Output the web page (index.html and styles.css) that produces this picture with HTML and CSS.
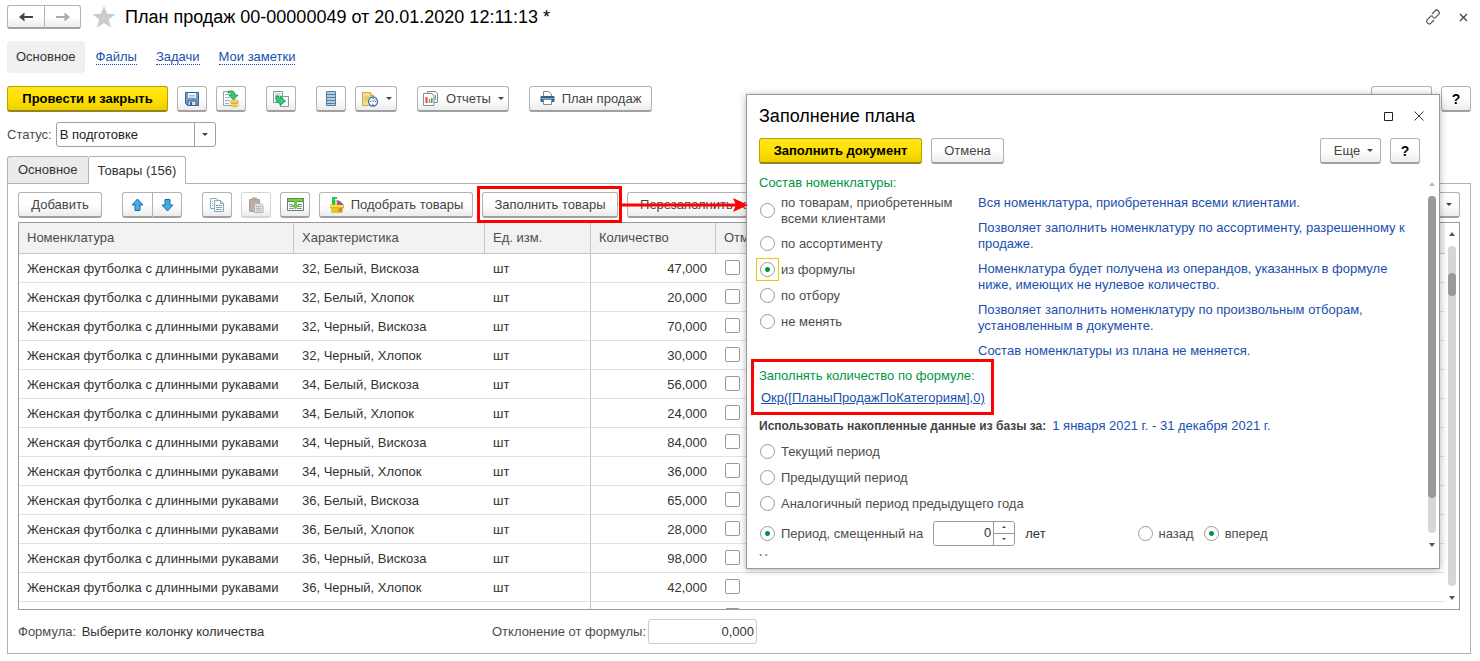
FILE: index.html
```html
<!DOCTYPE html>
<html lang="ru">
<head>
<meta charset="utf-8">
<title>План продаж</title>
<link rel="stylesheet" href="styles.css">
</head>
<body>
<div class="page">
  <header class="title-row">
    <div class="joined nav-buttons">
      <button class="btn" aria-label="Назад"><svg width="14" height="10" viewBox="0 0 14 10"><path d="M3 5h11" stroke="#444" stroke-width="2"/><path d="M0 5l5.500-4.500v3L4 5l1.500 1.500v3z" fill="#444"/></svg></button>
      <button class="btn" aria-label="Вперед"><svg width="14" height="10" viewBox="0 0 14 10"><path d="M0 5h11" stroke="#aaa" stroke-width="2"/><path d="M14 5L8.500.500v3L10 5 8.500 6.500v3z" fill="#aaa"/></svg></button>
    </div>
    <svg class="star" width="24" height="22" viewBox="0 0 24 22"><path d="M12 0l3 7.800 8.500.4-6.700 5.200 2.300 8.300L12 17l-7.100 4.700 2.300-8.300L.5 8.200 9 7.800z" fill="#c9cbcd"/></svg>
    <h1 class="title">План продаж 00-00000049 от 20.01.2020 12:11:13 *</h1>
    <span class="spacer"></span>
    <button class="bare" aria-label="Ссылка"><svg width="16" height="16" viewBox="0 0 16 16" fill="none" stroke="#555" stroke-width="1.200"><path d="M7 5l3-3.200c2.200-2.200 5.600 1.200 3.700 3.600L11 8.200C10 9.200 8.800 9.200 7.800 8.400M9 11l-3 3.200c-2.200 2.200-5.600-1.200-3.700-3.600L5 7.800C6 6.800 7.200 6.800 8.200 7.600"/></svg></button>
    <button class="bare" aria-label="Закрыть"><svg width="9" height="9" viewBox="0 0 9 9"><path d="M1 1l7 7M8 1L1 8" stroke="#444" stroke-width="1.300"/></svg></button>
  </header>

  <nav class="sections">
    <a class="section current" href="#main">Основное</a>
    <a class="section" href="#files">Файлы</a>
    <a class="section" href="#tasks">Задачи</a>
    <a class="section" href="#notes">Мои заметки</a>
  </nav>

  <div class="toolbar">
    <div class="group">
      <button class="btn primary">Провести и закрыть</button>
      <button class="btn icon" aria-label="Записать"><svg width="16" height="16" viewBox="0 0 16 16"><path d="M1.500 1.500h13v13h-11l-2-2z" fill="#6e9cc7" stroke="#38658f"/><path d="M4 2h8v5H4z" fill="#f4f8fb"/><path d="M5 4.500h6M5 6h6" stroke="#a9bccd"/><path d="M4 10h8v4.500H4z" fill="#d5dde5" stroke="#38658f"/><path d="M6 11h2v3H6z" fill="#38658f"/></svg></button>
      <button class="btn icon" aria-label="Провести"><svg width="18" height="18" viewBox="0 0 18 18"><path d="M1.500 1.500h10v14h-10z" fill="#f6f9fa" stroke="#8fa3ae"/><path d="M3 4.500h5M3 7.500h5M3 10.500h5M3 13.500h4" stroke="#9fb0ba"/><path d="M6 1.500c4-1.500 7 0 7 3.500h3l-4.500 5L7 5h3c0-2-1.500-2.500-4-2z" fill="#2fcf70" stroke="#128b45" stroke-width=".8"/><path d="M8.500 11.500v4.500c1 1.500 7 1.500 8 0v-4.500" fill="#e5b53a"/><ellipse cx="12.500" cy="11.500" rx="4" ry="1.500" fill="#f8dc72" stroke="#c89a26" stroke-width=".7"/><path d="M8.500 14c1 1.500 7 1.500 8 0" fill="none" stroke="#fff0a0"/></svg></button>
    </div>
    <div class="group">
      <button class="btn icon" aria-label="Создать на основании"><svg width="18" height="18" viewBox="0 0 18 18"><path d="M1.500 1.500h9v11h-9zM8.500 6.500h8v10h-8z" fill="#f6f9fa" stroke="#8097a5"/><path d="M3 4h6M3 6h6M3 8h3" stroke="#a9bac3"/><path d="M4 6v3.500C4 12 6 13 8 13v2.500l5.500-4.500L8 6.500V9C7 9 6.500 8.500 6.500 6z" fill="#2fcf70" stroke="#128b45" stroke-width=".8"/></svg></button>
    </div>
    <div class="group">
      <button class="btn icon" aria-label="Список"><svg width="10" height="15" viewBox="0 0 10 15"><path d="M.5.500h9v14h-9z" fill="#b3cee1" stroke="#527f9f"/><path d="M1 3.500h8M1 6.500h8M1 9.500h8M1 12.500h8" stroke="#527f9f"/></svg></button>
      <button class="btn history" aria-label="История"><svg width="18" height="16" viewBox="0 0 18 16"><path d="M1.500 1.500h8l3 3v10h-11z" fill="#f6dd91" stroke="#cda64b"/><path d="M9.500 1.500v3h3" fill="#fff2c5" stroke="#cda64b"/><path d="M3 6h6M3 8h4M3 10h3" stroke="#d7b65e"/><circle cx="12" cy="10.500" r="4.500" fill="#f5faff" stroke="#3f74a5" stroke-width="1.300"/><path d="M12 7v1M9 10.500h1M12 13v1M14 10.500h1" fill="none" stroke="#3f74a5"/><path d="M12 10.500l2-2M12 10.500l-1-1" stroke="#e34b3c"/></svg><span class="caret"></span></button>
    </div>
    <div class="group">
      <button class="btn reports"><svg width="17" height="17" viewBox="0 0 17 17"><path d="M5.500 1.500h8l2 2v9h-10z" fill="#f6f8fa" stroke="#78909f"/><path d="M1.500 3.500h8l2.500 2v10H1.500z" fill="#fff" stroke="#78909f"/><path d="M4.500 7v6" stroke="#e0423c" stroke-width="2"/><path d="M7.500 9v4" stroke="#df7a32" stroke-width="1.500"/><path d="M9.800 8v5" stroke="#3ba554" stroke-width="1.500"/><path d="M13.500 5v5" stroke="#72b478"/></svg>Отчеты<span class="caret"></span></button>
    </div>
    <div class="group">
      <button class="btn print"><svg width="15" height="15" viewBox="0 0 15 15"><path d="M3.500 5V.5h5l3 2.500v2" fill="#fff" stroke="#7c8d99"/><rect x=".5" y="5" width="14" height="6" rx="1" fill="#32618c"/><path d="M1 7.500h13" stroke="#80abd0"/><path d="M3.500 8.500h8v5h-8z" fill="#fff" stroke="#7c8d99"/></svg>План продаж</button>
    </div>
    <span class="spacer"></span>
    <div class="group">
      <button class="btn more">Еще<span class="caret"></span></button>
      <button class="btn help">?</button>
    </div>
  </div>

  <div class="status-row">
    <label for="status">Статус:</label>
    <span class="select-box">
      <select id="status"><option>В подготовке</option></select>
      <span class="caret"></span>
    </span>
  </div>

  <div class="tabs" role="tablist">
    <button class="tab" role="tab">Основное</button>
    <button class="tab active" role="tab" aria-selected="true">Товары (156)</button>
  </div>

  <main class="panel">
    <div class="toolbar">
      <div class="group"><button class="btn add">Добавить</button></div>
      <div class="joined">
        <button class="btn icon" aria-label="Вверх"><svg width="13" height="14" viewBox="0 0 13 14"><path d="M6.500 1L12 7H9v5.500H4V7H1z" fill="#41aee8" stroke="#1e6b9e"/></svg></button>
        <button class="btn icon" aria-label="Вниз"><svg width="13" height="14" viewBox="0 0 13 14"><path d="M6.500 13L12 7H9V1.500H4V7H1z" fill="#41aee8" stroke="#1e6b9e"/></svg></button>
      </div>
      <div class="group">
        <button class="btn icon" aria-label="Скопировать"><svg width="16" height="16" viewBox="0 0 16 16"><path d="M1.500 1.500h6l2 2v8h-8z" fill="#fff" stroke="#87a8b9"/><path d="M5.500 3.500h6l3 3v8h-9z" fill="#fff" stroke="#87a8b9"/><path d="M11.500 3.500v3h3M7 8.500h6M7 10.500h6M7 12.500h6M3 4.500h1M3 6.500h1M3 8.500h1" fill="none" stroke="#87a8b9"/></svg></button>
        <button class="btn icon" disabled aria-label="Вставить"><svg width="16" height="16" viewBox="0 0 16 16"><path d="M1.500 2.500h10v12h-10z" fill="#c3aca0" stroke="#b19c92"/><path d="M4 .5h5v3H4z" fill="#a7a7a7"/><path d="M6.500 6.500h6l2.500 2v7H6.500z" fill="#dde4ea" stroke="#a6b5c1"/><path d="M8 9.500h5M8 11.500h5M8 13.500h5" stroke="#a6b5c1"/></svg></button>
        <button class="btn icon" aria-label="Загрузить"><svg width="17" height="15" viewBox="0 0 17 15"><path d="M.5 1.500h16v12H.5z" fill="#fff" stroke="#6c7e6c"/><path d="M.5 1.500h16v3H.5z" fill="#7cc757" stroke="#4b9b37"/><path d="M2 7.500h4M2 9.500h4M2 11.500h5M11 7.500h4M11 9.500h4M10 11.500h5" stroke="#8a938e"/><path d="M7 4h3v4h2.500l-4 4.500-4-4.500H7z" fill="#6fc64b"/></svg></button>
        <button class="btn pick"><svg width="16" height="17" viewBox="0 0 16 17"><path d="M3 1h5v2H6v7H3z" fill="#27cb3b"/><path d="M6 4h2v6H6z" fill="#a8e6a0"/><path d="M8 4l3 1v6H8z" fill="#e84368"/><path d="M11 5l3 3v3h-3z" fill="#675ade"/><path d="M1 8l2 1h9l3-1v4l-2 1H3l-2-1z" fill="#e0b61c"/><path d="M1 9h13v2H1z" fill="#ffe04c"/><path d="M2.500 12h11v4.500h-11z" fill="#c8940d"/><path d="M2.500 12h7v4.500h-7z" fill="#e9c22c"/></svg>Подобрать товары</button>
        <span class="callout">
          <button class="btn fill">Заполнить товары</button>
          <span class="callout-frame"></span>
          <svg class="callout-arrow" width="127" height="16" viewBox="0 0 127 16"><path d="M0 6.500h116v3H0z" fill="#f00"/><path d="M112 1l15 7-15 7 3-7z" fill="#f00"/></svg>
        </span>
        <button class="btn refill">Перезаполнить товары</button>
      </div>
      <span class="spacer"></span>
      <button class="btn more">Еще<span class="caret"></span></button>
    </div>

    <div class="grid">
      <table class="goods">
        <colgroup><col class="c-name"><col class="c-char"><col class="c-unit"><col class="c-qty"><col></colgroup>
        <thead><tr><th>Номенклатура</th><th>Характеристика</th><th>Ед. изм.</th><th>Количество</th><th>Отменено</th></tr></thead>
        <tbody>
          <tr><td>Женская футболка с длинными рукавами</td><td>32, Белый, Вискоза</td><td>шт</td><td>47,000</td><td><input type="checkbox" aria-label="Отменено"></td></tr>
          <tr><td>Женская футболка с длинными рукавами</td><td>32, Белый, Хлопок</td><td>шт</td><td>20,000</td><td><input type="checkbox" aria-label="Отменено"></td></tr>
          <tr><td>Женская футболка с длинными рукавами</td><td>32, Черный, Вискоза</td><td>шт</td><td>70,000</td><td><input type="checkbox" aria-label="Отменено"></td></tr>
          <tr><td>Женская футболка с длинными рукавами</td><td>32, Черный, Хлопок</td><td>шт</td><td>30,000</td><td><input type="checkbox" aria-label="Отменено"></td></tr>
          <tr><td>Женская футболка с длинными рукавами</td><td>34, Белый, Вискоза</td><td>шт</td><td>56,000</td><td><input type="checkbox" aria-label="Отменено"></td></tr>
          <tr><td>Женская футболка с длинными рукавами</td><td>34, Белый, Хлопок</td><td>шт</td><td>24,000</td><td><input type="checkbox" aria-label="Отменено"></td></tr>
          <tr><td>Женская футболка с длинными рукавами</td><td>34, Черный, Вискоза</td><td>шт</td><td>84,000</td><td><input type="checkbox" aria-label="Отменено"></td></tr>
          <tr><td>Женская футболка с длинными рукавами</td><td>34, Черный, Хлопок</td><td>шт</td><td>36,000</td><td><input type="checkbox" aria-label="Отменено"></td></tr>
          <tr><td>Женская футболка с длинными рукавами</td><td>36, Белый, Вискоза</td><td>шт</td><td>65,000</td><td><input type="checkbox" aria-label="Отменено"></td></tr>
          <tr><td>Женская футболка с длинными рукавами</td><td>36, Белый, Хлопок</td><td>шт</td><td>28,000</td><td><input type="checkbox" aria-label="Отменено"></td></tr>
          <tr><td>Женская футболка с длинными рукавами</td><td>36, Черный, Вискоза</td><td>шт</td><td>98,000</td><td><input type="checkbox" aria-label="Отменено"></td></tr>
          <tr><td>Женская футболка с длинными рукавами</td><td>36, Черный, Хлопок</td><td>шт</td><td>42,000</td><td><input type="checkbox" aria-label="Отменено"></td></tr>
          <tr><td></td><td></td><td></td><td></td><td><input type="checkbox" aria-label="Отменено"></td></tr>
        </tbody>
      </table>
      <div class="scroll grid-scroll">
        <span class="arrow up"></span>
        <span class="track"><span class="thumb"></span></span>
        <span class="arrow down"></span>
      </div>
    </div>

    <footer class="summary">
      <span class="formula"><span class="muted">Формула:</span> <span>Выберите колонку количества</span></span>
      <label class="muted" for="deviation">Отклонение от формулы:</label>
      <input class="deviation" id="deviation" value="0,000" readonly>
    </footer>
  </main>
</div>

<section class="dialog" role="dialog" aria-labelledby="dialog-title">
  <header class="dialog-head">
    <h2 class="title" id="dialog-title">Заполнение плана</h2>
    <span class="spacer"></span>
    <button class="bare" aria-label="Развернуть"><svg width="9" height="9" viewBox="0 0 9 9"><path d="M.5.500h8v8h-8z" fill="none" stroke="#222"/></svg></button>
    <button class="bare" aria-label="Закрыть"><svg width="10" height="10" viewBox="0 0 10 10"><path d="M.5.500l9 9M9.500.500l-9 9" stroke="#333"/></svg></button>
  </header>
  <div class="dialog-bar">
    <button class="btn primary">Заполнить документ</button>
    <button class="btn cancel">Отмена</button>
    <span class="spacer"></span>
    <button class="btn more">Еще<span class="caret"></span></button>
    <button class="btn help">?</button>
  </div>
  <div class="dialog-body">
    <div class="dialog-content">
      <div class="green">Состав номенклатуры:</div>
      <div class="choices">
        <div class="options">
          <label class="option tall"><input type="radio" name="set"><span>по товарам, приобретенным всеми клиентами</span></label>
          <label class="option"><input type="radio" name="set"><span>по ассортименту</span></label>
          <label class="option focused"><input type="radio" name="set" checked><span>из формулы</span></label>
          <label class="option"><input type="radio" name="set"><span>по отбору</span></label>
          <label class="option"><input type="radio" name="set"><span>не менять</span></label>
        </div>
        <div class="hints">
          <p>Вся номенклатура, приобретенная всеми клиентами.</p>
          <p>Позволяет заполнить номенклатуру по ассортименту, разрешенному к продаже.</p>
          <p>Номенклатура будет получена из операндов, указанных в формуле ниже, имеющих не нулевое количество.</p>
          <p>Позволяет заполнить номенклатуру по произвольным отборам, установленным в документе.</p>
          <p>Состав номенклатуры из плана не меняется.</p>
        </div>
      </div>
      <div class="formula-box">
        <div class="green">Заполнять количество по формуле:</div>
        <a href="#formula">Окр([ПланыПродажПоКатегориям],0)</a>
      </div>
      <div class="period-line"><b>Использовать накопленные данные из базы за:</b><span class="blue">1 января 2021 г. - 31 декабря 2021 г.</span></div>
      <label class="option"><input type="radio" name="period"><span>Текущий период</span></label>
      <label class="option"><input type="radio" name="period"><span>Предыдущий период</span></label>
      <label class="option"><input type="radio" name="period"><span>Аналогичный период предыдущего года</span></label>
      <div class="shift-row">
        <label class="option"><input type="radio" name="period" checked><span>Период, смещенный на</span></label>
        <span class="spinner">
          <input id="years" value="0" inputmode="numeric">
          <span class="steps"><button aria-label="Больше"><span class="step up"></span></button><button aria-label="Меньше"><span class="step down"></span></button></span>
        </span>
        <label class="years" for="years">лет</label>
        <label class="option back"><input type="radio" name="dir"><span>назад</span></label>
        <label class="option"><input type="radio" name="dir" checked><span>вперед</span></label>
      </div>
      <div class="cut">У</div>
    </div>
    <div class="scroll dialog-scroll">
      <span class="arrow up off"></span>
      <span class="track"><span class="thumb"></span></span>
      <span class="arrow down"></span>
    </div>
  </div>
</section>
</body>
</html>
```
FILE: styles.css
```css
* { box-sizing: border-box; }
html, body { height: 100%; }
body {
  margin: 0;
  position: relative;
  overflow: hidden;
  background: #fff;
  color: #333;
  font: 13px/16px "Liberation Sans", Arial, sans-serif;
}
button, input, select { font: inherit; color: inherit; }
.spacer { flex: 1; }
.muted { color: #4d4d4d; }

.page {
  display: flex;
  flex-direction: column;
  height: 100%;
  padding: 5px 9px 7px 7px;
}

/* Title */
.title-row { display: flex; align-items: center; height: 24px; }
.title { margin: 0; font-size: 18px; line-height: 24px; font-weight: 400; color: #000; }
.star { margin: 0 9px 0 11px; }
.bare { display: flex; padding: 0; border: 0; background: none; }
.title-row .bare + .bare { margin: 0 3px 0 18px; }
.nav-buttons .btn { width: 37px; height: 24px; }

/* Section links */
.sections { display: flex; align-items: center; gap: 19px; margin-top: 12px; }
.section { color: #1a4fae; text-decoration: none; border-bottom: 1px dotted #1a4fae; line-height: 15px; }
.section.current { padding: 8px 9px; margin-right: -8px; border: 0; border-radius: 4px; background: #f0f0f0; color: #333; line-height: 16px; }

/* Buttons */
.btn {
  display: inline-flex;
  align-items: center;
  justify-content: center;
  height: 26px;
  padding: 0;
  border: 1px solid #b3b3b3;
  border-bottom: 2px solid #a0a0a0;
  border-radius: 3px;
  background: linear-gradient(#fff 50%, #ececec);
  color: #444;
  white-space: nowrap;
}
.btn:disabled { border-color: #d4d4d4; }
.primary {
  width: 161px;
  border-color: #b8a000 #b8a000 #94851f;
  background: linear-gradient(#ffe71f, #ffe000 50%, #ebcf00);
  color: #000;
  font-weight: 700;
}
.icon, .help { width: 30px; }
.help { color: #000; font-size: 14px; font-weight: 700; }
.joined { display: flex; }
.joined .btn:first-child { border-radius: 3px 0 0 3px; border-right-width: 0; }
.joined .btn:last-child { border-radius: 0 3px 3px 0; }
.caret { width: 0; height: 0; border: 3px solid transparent; border-top-color: #444; border-bottom-width: 0; }
.history { width: 42px; gap: 7px; }
.reports { width: 92px; gap: 7px; }
.print { width: 123px; gap: 7px; }
.more { width: 61px; padding-left: 6px; gap: 7px; }
.add { width: 84px; }
.pick { width: 154px; gap: 6px; }
.fill { width: 136px; }
.refill { width: 166px; }
.cancel { width: 73px; }

.toolbar { display: flex; gap: 20px; }
.group { display: flex; gap: 9px; }
.page > .toolbar { margin-top: 13px; }

/* Status */
.status-row { display: flex; align-items: center; gap: 4px; margin-top: 10px; color: #4d4d4d; }
.select-box { position: relative; width: 160px; }
.select-box select {
  display: block;
  width: 100%;
  height: 25px;
  padding: 0 3px;
  border: 1px solid #a0a0a0;
  border-radius: 3px;
  appearance: none;
  background: linear-gradient(#a0a0a0, #a0a0a0) right 20px top / 1px 100% no-repeat #fff;
  color: #222;
}
.select-box .caret { position: absolute; right: 8px; top: 11px; pointer-events: none; }

/* Tabs */
.tabs { display: flex; margin-top: 9px; }
.tab { height: 27px; padding: 0 10px; border: 1px solid #b3b3b3; border-bottom: 0; border-right: 0; background: #ebebeb; border-radius: 3px 0 0 0; }
.tab.active { position: relative; height: 28px; padding: 0 9px; margin-bottom: -1px; border-right: 1px solid #b3b3b3; border-radius: 3px 3px 0 0; background: #fff; }

.panel {
  flex: 1;
  min-height: 0;
  display: flex;
  flex-direction: column;
  padding: 8px 10px 9px;
  border: 1px solid #b3b3b3;
}

/* Highlight on the fill button */
.callout { position: relative; display: flex; }
.callout-frame { position: absolute; inset: -6px -4px -5px -5px; border: 3px solid #f00; pointer-events: none; }
.callout-arrow { position: absolute; left: 139px; top: 5px; z-index: 3; pointer-events: none; }

/* Goods table */
.grid { flex: 1; min-height: 0; display: flex; align-items: flex-start; margin-top: 4px; border: 1px solid #999; overflow: hidden; }
.goods { flex: 1; width: 100%; table-layout: fixed; border-collapse: separate; border-spacing: 0; }
.c-name { width: 275px; }
.c-char { width: 191px; }
.c-unit { width: 106px; }
.c-qty { width: 125px; }
.goods th { height: 31px; padding: 0 8px; border-right: 1px solid #c6c6c6; border-bottom: 1px solid #c6c6c6; background: #f2f2f2; color: #4d4d4d; font-weight: 400; text-align: left; }
.goods th:last-child { border-right: 0; }
.goods td { height: 29px; padding: 2px 8px 0; border-bottom: 1px solid #e2e2e2; white-space: nowrap; }
.goods td:nth-child(3) { border-right: 1px solid #c6c6c6; }
.goods td:nth-child(4) { padding-right: 9px; text-align: right; }
.goods td:nth-child(5) { padding: 0 9px 2px; }
input[type="checkbox"], input[type="radio"] { appearance: none; flex: none; display: block; width: 15px; height: 15px; margin: 0; border: 1px solid #999; border-radius: 2px; background: #fff; }
input[type="radio"] { border-radius: 50%; }
input[type="radio"]:checked { background: radial-gradient(circle, #009646 2px, #fff 3px); }

/* Scroll bars */
.scroll { display: flex; flex-direction: column; align-items: center; align-self: stretch; }
.track { width: 8px; flex: 1; border-radius: 4px; background: #d6d6d6; }
.thumb { display: block; border-radius: 4px; background: #999; }
.arrow { border: 3px solid transparent; }
.arrow.up { border-top: 0; border-bottom: 4px solid #555; }
.arrow.down { border-bottom: 0; border-top: 4px solid #555; }
.arrow.off { border-bottom-color: #bbb; }
.grid-scroll { width: 14px; padding: 9px 0; gap: 10px; }
.grid-scroll .thumb { height: 23px; margin-top: 27px; }

/* Summary */
.summary { display: flex; align-items: center; margin-top: 9px; }
.formula { width: 474px; }
.formula .muted { margin-right: 2px; }
.deviation { width: 109px; height: 25px; margin-left: 2px; padding: 0 2px; border: 1px solid #ccc; border-radius: 3px; text-align: right; }

/* Dialog */
.dialog {
  position: absolute;
  top: 94px;
  right: 40px;
  z-index: 2;
  width: 694px;
  border: 1px solid #999;
  background: #fff;
  box-shadow: 0 1px 7px rgba(0, 0, 0, .3);
}
.dialog-head { display: flex; align-items: center; padding: 9px 15px 10px 12px; }
.dialog-head .bare + .bare { margin-left: 21px; }
.dialog-bar { display: flex; gap: 9px; padding: 0 19px 0 12px; }
.dialog-bar .primary { width: 163px; }
.dialog-body { display: flex; height: 404px; }
.dialog-content { flex: 1; min-width: 0; padding: 11px 0 0 12px; }
.green { color: #009646; }
.blue, .hints, .formula-box a { color: #1a4fae; }
.choices { display: flex; margin-top: 3px; }
.options { width: 219px; }
.option { display: flex; align-items: center; gap: 6px; height: 26px; padding-left: 1px; color: #4d4d4d; }
.option span { padding-top: 2px; }
.option.tall { height: 32px; margin-bottom: 4px; }
.option.tall span { width: 175px; }
.focused input { position: relative; }
.focused input::after { content: ""; position: absolute; inset: -5px; border: 1px solid #f5c400; }
.hints { flex: 1; display: flex; flex-direction: column; gap: 9px; max-width: 430px; padding-top: 1px; }
.hints p { margin: 0; }
.formula-box { width: 243px; padding: 6px 5px 5px; margin-left: -8px; border: 3px solid #f00; }
.formula-box a { display: block; margin: 6px 0 1px 2px; }
.period-line { display: flex; gap: 6px; margin: 3px 0 4px; }
.period-line b { color: #444; font-size: 12px; }
.shift-row { display: flex; align-items: center; margin-top: 4px; }
.spinner { display: flex; width: 82px; height: 25px; margin: 0 10px; border: 1px solid #999; border-radius: 3px; overflow: hidden; }
.spinner input { flex: 1; width: 0; min-width: 0; padding: 0 2px; border: 0; text-align: right; }
.steps { display: flex; flex-direction: column; width: 21px; border-left: 1px solid #999; }
.steps button { flex: 1; display: flex; align-items: center; justify-content: center; padding: 0; border: 0; background: #fff; }
.steps button + button { border-top: 1px solid #999; }
.step { border: 2px solid transparent; }
.step.up { border-top: 0; border-bottom-color: #444; }
.step.down { border-bottom: 0; border-top-color: #444; }
.years { padding-top: 2px; }
.back { margin: 0 9px 0 91px; }
.cut { height: 5px; margin-top: 5px; overflow: hidden; color: #5f7390; }
.dialog-scroll { width: 8px; margin-right: 3px; padding: 18px 0 21px; gap: 10px; }
.dialog-scroll .thumb { height: 302px; }
```
